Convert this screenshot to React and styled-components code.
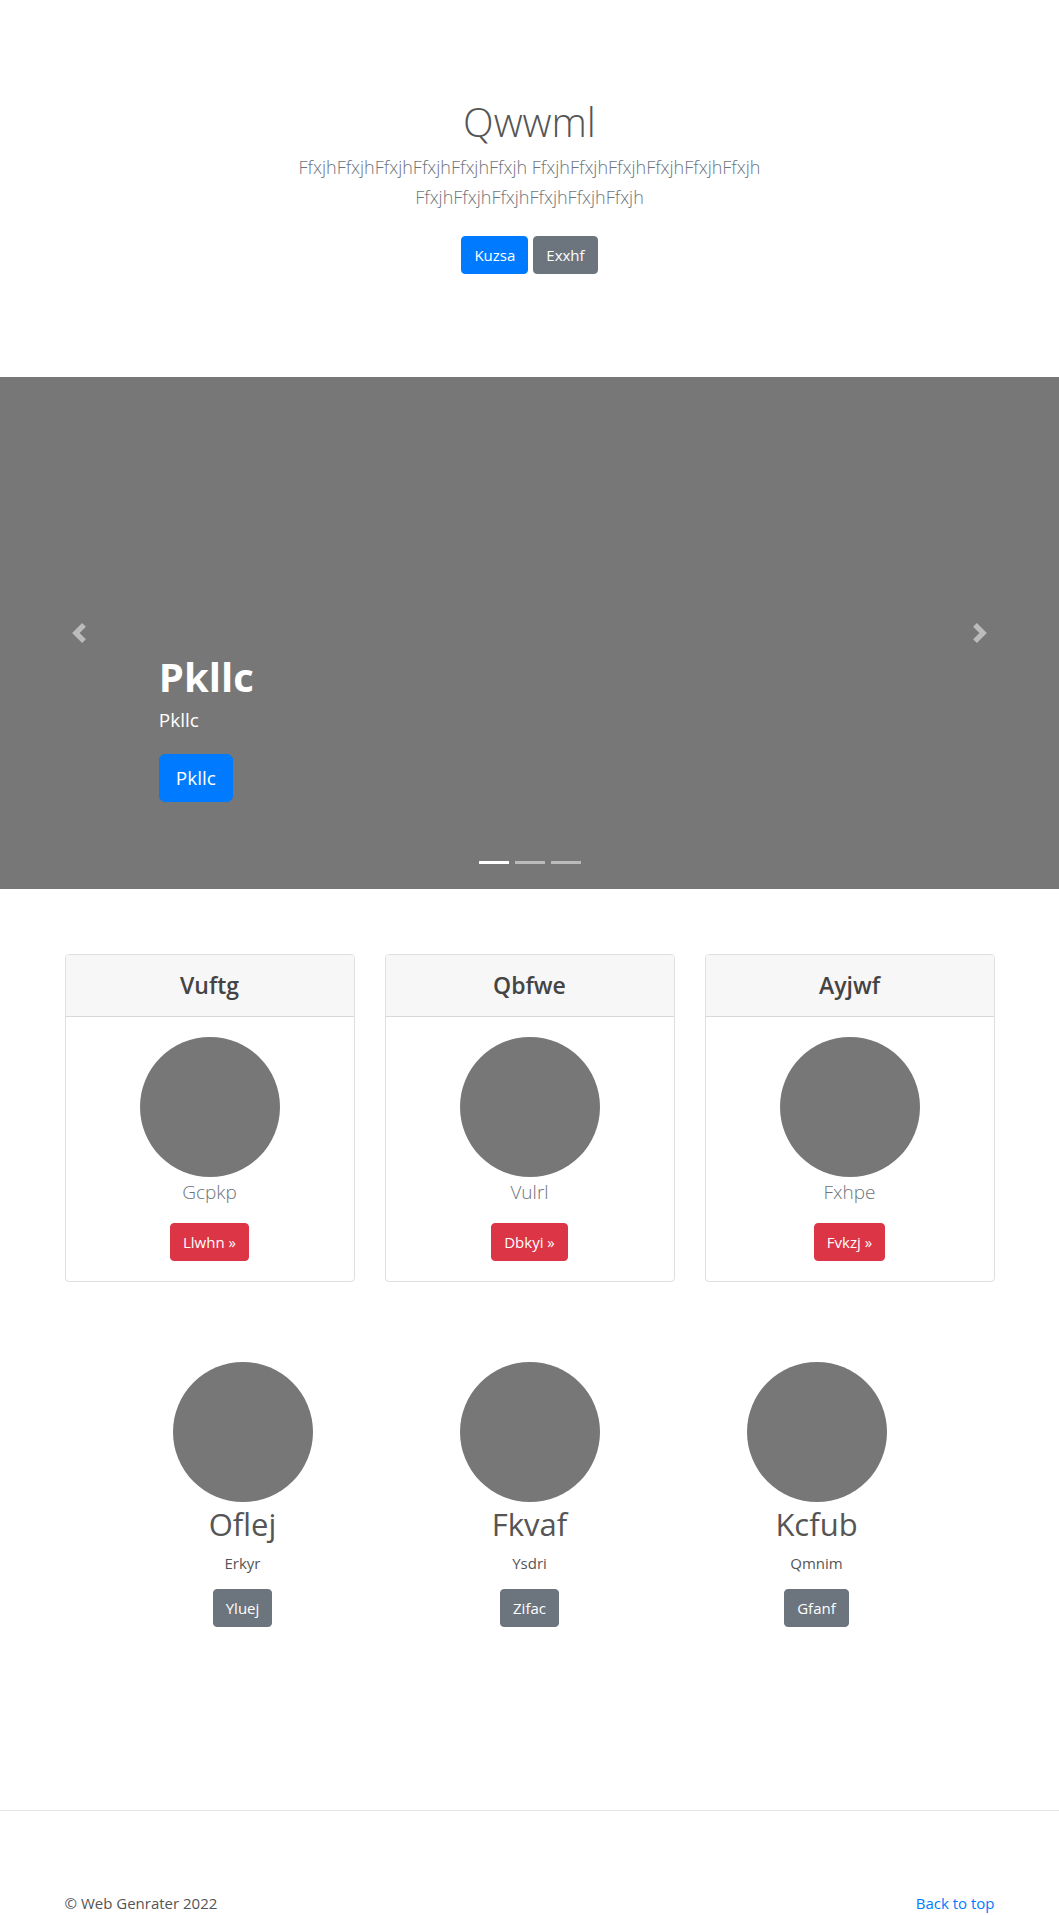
import styled, { createGlobalStyle } from "styled-components"

const GlobalStyle = createGlobalStyle`
  * { box-sizing: border-box; }
  body {
    margin: 0;
    font-family: "Segoe UI", "Open Sans", "Noto Sans", sans-serif;
    color: #555;
    background: #fff;
  }
`

const cards = [
  { title: "Vuftg", text: "Gcpkp", btn: "Llwhn" },
  { title: "Qbfwe", text: "Vulrl", btn: "Dbkyi" },
  { title: "Ayjwf", text: "Fxhpe", btn: "Fvkzj" },
]

const people = [
  { name: "Oflej", text: "Erkyr", btn: "Yluej" },
  { name: "Fkvaf", text: "Ysdri", btn: "Zifac" },
  { name: "Kcfub", text: "Qmnim", btn: "Gfanf" },
]

// bootstrap carousel chevrons
const Chevron = ({ dir }) => (
  <svg width="20" height="20" viewBox="0 0 8 8" fill="#fff">
    {dir === "left" ? (
      <path d="M5.25 0l-4 4 4 4 1.5-1.5L4.25 4l2.5-2.5L5.25 0z" />
    ) : (
      <path d="M2.75 0l-1.5 1.5L3.75 4l-2.5 2.5L2.75 8l4-4-4-4z" />
    )}
  </svg>
)

export default function App() {
  return (
    <>
      <GlobalStyle />
      <Hero>
        <HeroTitle>Qwwml</HeroTitle>
        <Lead>
          FfxjhFfxjhFfxjhFfxjhFfxjhFfxjh FfxjhFfxjhFfxjhFfxjhFfxjhFfxjh
          FfxjhFfxjhFfxjhFfxjhFfxjhFfxjh
        </Lead>
        <HeroButtons>
          <Btn $bg="#007bff">Kuzsa</Btn>
          <Btn $bg="#6c757d">Exxhf</Btn>
        </HeroButtons>
      </Hero>

      <Carousel>
        <Control $side="left"><Chevron dir="left" /></Control>
        <Control $side="right"><Chevron dir="right" /></Control>
        <Caption>
          <CaptionTitle>Pkllc</CaptionTitle>
          <CaptionText>Pkllc</CaptionText>
          <BigBtn>Pkllc</BigBtn>
        </Caption>
        <Indicators>
          <Indicator $active />
          <Indicator />
          <Indicator />
        </Indicators>
      </Carousel>

      <CardGrid>
        {cards.map((c) => (
          <Card key={c.title}>
            <CardHeader>{c.title}</CardHeader>
            <CardBody>
              <Circle />
              <Muted>{c.text}</Muted>
              <Btn $bg="#dc3545">{c.btn} »</Btn>
            </CardBody>
          </Card>
        ))}
      </CardGrid>

      <Marketing>
        {people.map((p) => (
          <Person key={p.name}>
            <Circle />
            <PersonName>{p.name}</PersonName>
            <PersonText>{p.text}</PersonText>
            <Btn $bg="#6c757d">{p.btn}</Btn>
          </Person>
        ))}
      </Marketing>

      <Divider />

      <Footer>
        <span>© Web Genrater 2022</span>
        <TopLink href="#">Back to top</TopLink>
      </Footer>
    </>
  )
}

const Hero = styled.section`
  display: flex;
  flex-direction: column;
  align-items: center;
  text-align: center;
  padding: 98px 0 103px;
`
const HeroTitle = styled.h1`
  margin: 0 0 6px;
  font-size: 40px;
  line-height: 48px;
  font-weight: 300;
  color: #555;
`
const Lead = styled.p`
  margin: 0 0 24px;
  max-width: 610px;
  font-size: 18px;
  line-height: 30px;
  font-weight: 300;
  color: #6c757d;
`
const HeroButtons = styled.div`
  display: flex;
  gap: 5px;
`
const Btn = styled.a`
  display: inline-block;
  padding: 6px 12px;
  font-size: 15px;
  line-height: 24px;
  color: #fff;
  background: ${(p) => p.$bg};
  border: 1px solid ${(p) => p.$bg};
  border-radius: 4px;
  text-decoration: none;
`
const Carousel = styled.section`
  position: relative;
  height: 512px;
  background: #777;
  display: flex;
  align-items: flex-end;
  padding: 0 15% 87px;
`
const Control = styled.div`
  position: absolute;
  top: 0;
  bottom: 0;
  ${(p) => p.$side}: 0;
  width: 15%;
  display: flex;
  align-items: center;
  justify-content: center;
  opacity: 0.5;
`
const Caption = styled.div`
  display: flex;
  flex-direction: column;
  align-items: flex-start;
  color: #fff;
`
const CaptionTitle = styled.h1`
  margin: 0 0 4px;
  font-size: 40px;
  line-height: 48px;
  font-weight: 700;
`
const CaptionText = styled.p`
  margin: 0 0 19px;
  font-size: 19px;
  line-height: 30px;
  font-weight: 500;
`
const BigBtn = styled.a`
  padding: 8px 16px;
  font-size: 19px;
  line-height: 30px;
  color: #fff;
  background: #007bff;
  border: 1px solid #007bff;
  border-radius: 6px;
`
const Indicators = styled.div`
  position: absolute;
  left: 0;
  right: 0;
  bottom: 25px;
  display: flex;
  justify-content: center;
  gap: 6px;
`
const Indicator = styled.span`
  width: 30px;
  height: 3px;
  background: #fff;
  opacity: ${(p) => (p.$active ? 1 : 0.5)};
`
const CardGrid = styled.section`
  width: 930px;
  margin: 65px auto 0;
  display: grid;
  grid-template-columns: repeat(3, 1fr);
  gap: 30px;
`
const Card = styled.div`
  border: 1px solid rgba(0, 0, 0, 0.125);
  border-radius: 4px;
  overflow: hidden;
  text-align: center;
`
const CardHeader = styled.h4`
  margin: 0;
  padding: 16px 20px;
  font-size: 23px;
  line-height: 29px;
  font-weight: 600;
  color: #444;
  background: #f7f7f7;
  border-bottom: 1px solid rgba(0, 0, 0, 0.125);
`
const CardBody = styled.div`
  padding: 20px;
  display: flex;
  flex-direction: column;
  align-items: center;
`
const Circle = styled.div`
  width: 140px;
  height: 140px;
  border-radius: 50%;
  background: #777;
`
const Muted = styled.p`
  margin: 0 0 16px;
  font-size: 19px;
  line-height: 30px;
  font-weight: 300;
  color: #6c757d;
`
const Marketing = styled.section`
  width: 861px;
  margin: 80px auto 0;
  display: grid;
  grid-template-columns: repeat(3, 1fr);
`
const Person = styled.div`
  display: flex;
  flex-direction: column;
  align-items: center;
`
const PersonName = styled.h2`
  margin: 3px 0 8px;
  font-size: 31px;
  line-height: 38px;
  font-weight: 400;
  color: #555;
`
const PersonText = styled.p`
  margin: 0 0 14px;
  font-size: 15px;
  line-height: 24px;
`
const Divider = styled.hr`
  margin: 183px 0 0;
  border: 0;
  border-top: 1px solid #e5e5e5;
`
const Footer = styled.footer`
  width: 930px;
  margin: 0 auto;
  padding: 80px 0 48px;
  display: flex;
  justify-content: space-between;
  font-size: 15px;
  line-height: 24px;
  color: #555;
`
const TopLink = styled.a`
  color: #007bff;
  text-decoration: none;
`
